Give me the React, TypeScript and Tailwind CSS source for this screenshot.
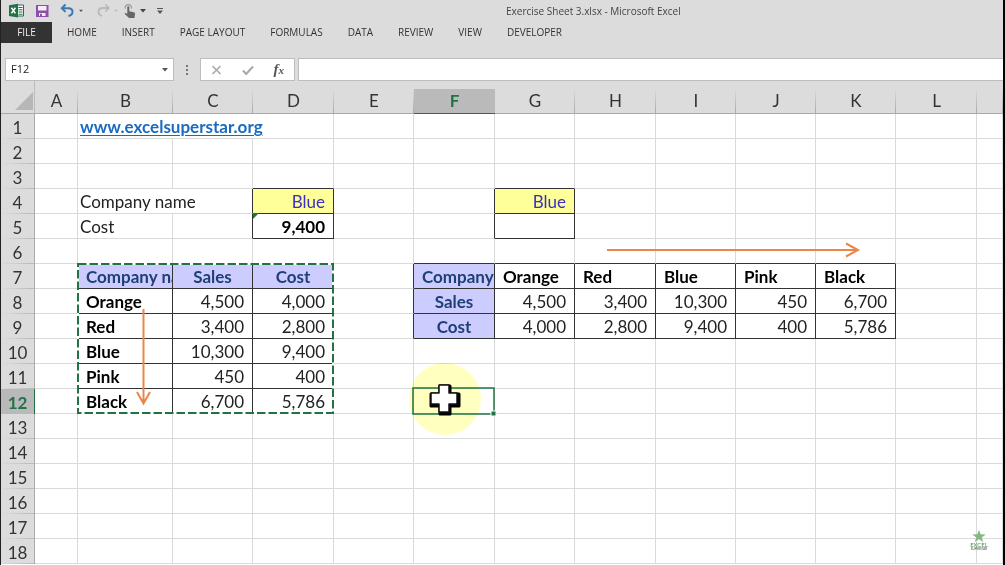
import { clsx } from "clsx"

type Cell = {
  text: string
  span?: number
  className?: string
  href?: string
}

const tabs = ["HOME", "INSERT", "PAGE LAYOUT", "FORMULAS", "DATA", "REVIEW", "VIEW", "DEVELOPER"]

const columns = [
  { name: "A", width: "w-[43px]" },
  { name: "B", width: "w-[95px]" },
  { name: "C", width: "w-[80px]" },
  { name: "D", width: "w-[81px]" },
  { name: "E", width: "w-[80px]" },
  { name: "F", width: "w-[81px]" },
  { name: "G", width: "w-[80px]" },
  { name: "H", width: "w-[81px]" },
  { name: "I", width: "w-[80px]" },
  { name: "J", width: "w-[80px]" },
  { name: "K", width: "w-[80px]" },
  { name: "L", width: "w-[81px]" },
  { name: "", width: "" },
]

const rows = Array.from({ length: 18 }, (_, i) => i + 1)

const label = "pl-[2px] text-[#222]"
const num = "pr-2 text-right text-[#222]"
const name = "pl-2 font-bold text-black"
const head = "bg-[#ccccff] text-center font-bold text-[#1f3f77]"
const headLeft = "bg-[#ccccff] pl-2 font-bold text-[#1f3f77]"
const picker = "bg-[#ffff99] pr-2 text-right text-[#3a2fc0]"

const cells: Record<string, Cell> = {
  B1: { text: "www.excelsuperstar.org", span: 3, className: "pl-[2px] font-bold", href: "#" },
  B4: { text: "Company name", span: 2, className: label },
  D4: { text: "Blue", className: picker },
  G4: { text: "Blue", className: picker },
  B5: { text: "Cost", className: label },
  D5: { text: "9,400", className: "pr-2 text-right font-bold text-black" },
  B7: { text: "Company name", className: headLeft },
  C7: { text: "Sales", className: head },
  D7: { text: "Cost", className: head },
  F7: { text: "Company name", className: headLeft },
  F8: { text: "Sales", className: head },
  F9: { text: "Cost", className: head },
}

const companies = [
  { company: "Orange", sales: "4,500", cost: "4,000" },
  { company: "Red", sales: "3,400", cost: "2,800" },
  { company: "Blue", sales: "10,300", cost: "9,400" },
  { company: "Pink", sales: "450", cost: "400" },
  { company: "Black", sales: "6,700", cost: "5,786" },
]

companies.forEach((c, i) => {
  cells[`B${8 + i}`] = { text: c.company, className: name }
  cells[`C${8 + i}`] = { text: c.sales, className: num }
  cells[`D${8 + i}`] = { text: c.cost, className: num }
  const col = "GHIJK"[i]
  cells[`${col}7`] = { text: c.company, className: name }
  cells[`${col}8`] = { text: c.sales, className: num }
  cells[`${col}9`] = { text: c.cost, className: num }
})

// column index (A = 0) and row number, inclusive
const boxes = [
  { c1: 3, c2: 3, r1: 4, r2: 5 },
  { c1: 6, c2: 6, r1: 4, r2: 5 },
  { c1: 1, c2: 3, r1: 7, r2: 12 },
  { c1: 5, c2: 10, r1: 7, r2: 9 },
]

function boxed(c: number, r: number) {
  return boxes.some((b) => c >= b.c1 && c <= b.c2 && r >= b.r1 && r <= b.r2)
}

function Caret({ className }: { className?: string }) {
  return (
    <svg viewBox="0 0 6 4" className={clsx("h-1", className ?? "w-1.5")} fill="currentColor">
      <path d="M0 0h6L3 3.6z" />
    </svg>
  )
}

function QuickAccess() {
  return (
    <div className="flex h-[22px] items-center pl-2">
      <button aria-label="Excel" className="w-4">
        <svg viewBox="0 0 16 16" className="h-4 w-4">
          <path d="M8 2h6.5v11H8z" fill="#fff" stroke="#217346" strokeWidth="1" />
          <path d="M9.5 4.5h4M9.5 6.8h4M9.5 9h4M9.5 11.2h4" stroke="#217346" strokeWidth="1.1" />
          <path d="M0 2.2 9 .8v13.6L0 13z" fill="#217346" />
          <path d="m2.4 4.8 4 5.6M6.4 4.8l-4 5.6" stroke="#fff" strokeWidth="1.5" />
        </svg>
      </button>
      <button aria-label="Save" className="ml-[10px] w-4">
        <svg viewBox="0 0 16 16" className="h-4 w-4">
          <path d="M1 2h12.500v12H1z" fill="#8d4fa8" />
          <path d="M3 3h8.500v4.500H3z" fill="#f4ecf7" />
          <path d="M4 10h6.500v3H4z" fill="#f4ecf7" />
          <path d="M5 10.800h2V13H5z" fill="#8d4fa8" />
        </svg>
      </button>
      <button aria-label="Undo" className="ml-[9px] flex items-center gap-[3px] text-[#555]">
        <svg viewBox="0 0 16 16" className="h-4 w-4" fill="none" stroke="#3c78b8" strokeWidth="2">
          <path d="M5.500 1.500 1.800 5.200l3.700 3.700M2 5.200h6.500c3 0 4 1.600 4 3.600 0 2.200-1.300 3.700-4 4.200" />
        </svg>
        <Caret className="w-1" />
      </button>
      <button aria-label="Redo" className="ml-3 flex items-center gap-[3px] text-[#bbb]">
        <svg viewBox="0 0 16 16" className="h-4 w-4" fill="none" stroke="#b9b9b9" strokeWidth="1.800">
          <path d="m10.500 1.500 3.200 3.500-3.200 3.500M13.500 5H8C5 5 3.500 6.800 3.500 8.800c0 2 1.200 3.500 3.500 4.200" />
        </svg>
        <Caret className="w-1" />
      </button>
      <button aria-label="Touch mode" className="ml-1 flex items-center gap-[2px] text-[#444]">
        <svg viewBox="0 0 16 16" className="h-4 w-4">
          <path d="M3.200 5.600a3.200 3.200 0 1 1 6.200 0" fill="none" stroke="#9a9a9a" strokeWidth="1.200" />
          <path
            d="M5.300 4.300c0-1.300 2-1.300 2 0v4l4.500 1c1 .3 1.300.8 1.200 1.800l-.5 4H7L2.500 10.800c.3-1 1.300-1.100 2.800.2z"
            fill="#666"
          />
        </svg>
        <Caret />
      </button>
      <button aria-label="Customize toolbar" className="ml-[11px] text-[#555]">
        <svg viewBox="0 0 6 6" className="h-1.5 w-1.5" fill="currentColor">
          <path d="M0 0h6v1H0zM0 2.500h6L3 6z" />
        </svg>
      </button>
      <h1 className="ml-[343px] text-[10px] whitespace-nowrap text-[#444]">
        Exercise Sheet 3.xlsx - Microsoft Excel
      </h1>
    </div>
  )
}

function Ribbon() {
  return (
    <nav className="flex h-[21px] items-center text-[10px] text-[#333]">
      <button className="h-full w-[51px] bg-[#333] text-[#eee]">FILE</button>
      <div className="flex gap-[25px] pl-[15px]">
        {tabs.map((t) => (
          <button key={t} className="whitespace-nowrap">
            {t}
          </button>
        ))}
      </div>
    </nav>
  )
}

function FormulaBar() {
  return (
    <div className="mt-[15px] flex h-[23px] items-stretch pl-1">
      <div className="flex w-[169px] items-center border border-[#bdbdbd] bg-white pr-[5px] pl-[5px]">
        <input
          aria-label="Name box"
          defaultValue="F12"
          className="min-w-0 flex-1 text-[11px] text-[#222] outline-none"
        />
        <button aria-label="Show names" className="text-[#555]">
          <Caret />
        </button>
      </div>
      <div className="flex w-[26px] flex-col items-center justify-center gap-[2px]">
        <span className="h-0.5 w-0.5 bg-[#777]" />
        <span className="h-0.5 w-0.5 bg-[#777]" />
        <span className="h-0.5 w-0.5 bg-[#777]" />
      </div>
      <div className="flex w-[95px] items-center justify-between border border-[#bdbdbd] bg-white px-[10px]">
        <button aria-label="Cancel">
          <svg viewBox="0 0 12 12" className="h-3 w-3" stroke="#a9a9a9" strokeWidth="1.600">
            <path d="m1.500 2 8 8M9.500 2l-8 8" />
          </svg>
        </button>
        <button aria-label="Enter">
          <svg viewBox="0 0 12 12" className="h-3 w-3" fill="none" stroke="#a9a9a9" strokeWidth="2">
            <path d="m1 6.500 3.200 3.500L11 2.500" />
          </svg>
        </button>
        <button
          aria-label="Insert function"
          className="font-['Liberation_Serif',serif] text-[15px] leading-4 font-bold text-[#555] italic"
        >
          f<span className="text-[11px]">x</span>
        </button>
      </div>
      <input
        aria-label="Formula"
        className="ml-[3px] min-w-0 flex-1 border border-r-0 border-[#bdbdbd] bg-white px-2 text-[11px] outline-none"
      />
    </div>
  )
}

function SheetRow({ row }: { row: number }) {
  const active = row === 12
  let skip = 0
  return (
    <tr className="h-[25px]">
      <th
        scope="row"
        className={clsx(
          "border-r p-0 pt-[2px] text-center",
          active
            ? "border-[#217346] bg-[#b9b9b9] font-bold text-[#217346]"
            : "border-[#aaa] bg-[linear-gradient(to_right,#dcdcdc,#b8b8b8)] bg-[length:100%_1px] bg-bottom bg-no-repeat font-normal text-[#333]",
          !active && "bg-[#dcdcdc]",
        )}
      >
        {row}
      </th>
      {columns.map((col, i) => {
        if (skip > 0) {
          skip--
          return null
        }
        const cell = cells[`${col.name}${row}`]
        const span = cell?.span ?? 1
        skip = span - 1
        const last = i + span - 1
        return (
          <td
            key={i}
            colSpan={span}
            className={clsx(
              "overflow-hidden border-r border-b p-0 pt-[2px] whitespace-nowrap",
              boxed(last, row) || boxed(last + 1, row) ? "border-r-[#333]" : "border-r-[#d9dbdb]",
              boxed(i, row) || boxed(i, row + 1) ? "border-b-[#333]" : "border-b-[#d9dbdb]",
              cell?.className,
            )}
          >
            {cell?.href ? (
              <a href={cell.href} className="text-[#1a6ac0] underline underline-offset-2">
                {cell.text}
              </a>
            ) : (
              cell?.text
            )}
          </td>
        )
      })}
    </tr>
  )
}

// Everything that floats above the cells: copy marquee, selection, arrows, pointer
function Overlays() {
  return (
    <>
      <div className="absolute top-[282px] left-[408px] h-[72px] w-[72px] rounded-full bg-[#ffffc0] mix-blend-multiply" />
      <svg className="pointer-events-none absolute top-0 left-0 h-[483px] w-[976px]" fill="none">
        <path d="M252 132h6l-6 6z" fill="#1c7a35" />
        <rect x="77" y="183" width="255" height="149" stroke="#fff" strokeWidth="2" />
        <rect x="77" y="183" width="255" height="149" stroke="#217346" strokeWidth="2" strokeDasharray="8.500 3" />
        <g stroke="#ed8547" strokeWidth="2">
          <path d="M142.500 228v94M136 311l6.500 11.500L149 311" />
          <path d="M606 169h251M845 162.500l12 6.500-12 6.500" />
        </g>
        <rect x="412" y="307" width="81" height="26" stroke="#217346" strokeWidth="1.500" />
        <path d="M490 330h5v5h-5z" fill="#217346" stroke="#fff" strokeWidth="1" />
        <g strokeLinejoin="round">
          <path d="M439 305h10v8h9v12h-9v8h-10v-8h-9v-12h9z" fill="#000" stroke="#000" strokeWidth="3" />
          <path d="M438 304h10v8h8v11h-8v8h-10v-8h-8v-11h8z" fill="#fff" stroke="#111" strokeWidth="1.500" />
        </g>
      </svg>
      <svg className="absolute top-[449px] left-[968px] h-6 w-5" viewBox="0 0 20 24" aria-label="Excel Superstar">
        <path d="m10 0 1.700 4.300 5 .2-4 2.900 1.600 4.600L10 9.300 5.700 12l1.600-4.600-4-2.900 5-.2z" fill="#86b886" />
        <text x="10" y="17" textAnchor="middle" fontSize="6" fill="#4f8a53">EXCEL</text>
        <text x="10" y="20" textAnchor="middle" fontSize="3" fill="#444">SUPERSTAR</text>
      </svg>
    </>
  )
}

export default function App() {
  return (
    <div className="flex min-h-screen flex-col overflow-hidden border-r-2 border-l border-r-black border-l-[#222] bg-white font-['Open_Sans',sans-serif]">
      <header className="bg-[#dcdcdc]">
        <QuickAccess />
        <Ribbon />
        <FormulaBar />
      </header>
      <main className="relative font-['Lato',sans-serif] text-[17px] leading-[22px]">
        <table className="w-full table-fixed border-separate border-spacing-0">
          <colgroup>
            <col className="w-[34px]" />
            {columns.map((c, i) => (
              <col key={i} className={c.width} />
            ))}
          </colgroup>
          <thead>
            <tr className="h-[33px] bg-[#dcdcdc]">
              <th className="border-r border-b border-r-[#bbb] border-b-[#aaa] p-0">
                <svg viewBox="0 0 18 18" className="mt-2 ml-3.5 h-[18px] w-[18px]">
                  <path d="M18 0v18H0z" fill="#b7b7b7" />
                </svg>
              </th>
              {columns.map((c, i) => (
                <th
                  key={i}
                  scope="col"
                  className={clsx(
                    "border-b p-0 pt-2",
                    c.name === "F"
                      ? "border-[#217346] bg-[linear-gradient(#bababa,#bababa)] bg-[length:100%_24px] bg-bottom bg-no-repeat font-bold text-[#217346]"
                      : "border-[#aaa] bg-[linear-gradient(to_bottom,#dcdcdc,#a8a8a8)] bg-[length:1px_24px] bg-right-bottom bg-no-repeat font-normal text-[#333]",
                  )}
                >
                  {c.name}
                </th>
              ))}
            </tr>
          </thead>
          <tbody>
            {rows.map((r) => (
              <SheetRow key={r} row={r} />
            ))}
          </tbody>
        </table>
        <Overlays />
      </main>
    </div>
  )
}
